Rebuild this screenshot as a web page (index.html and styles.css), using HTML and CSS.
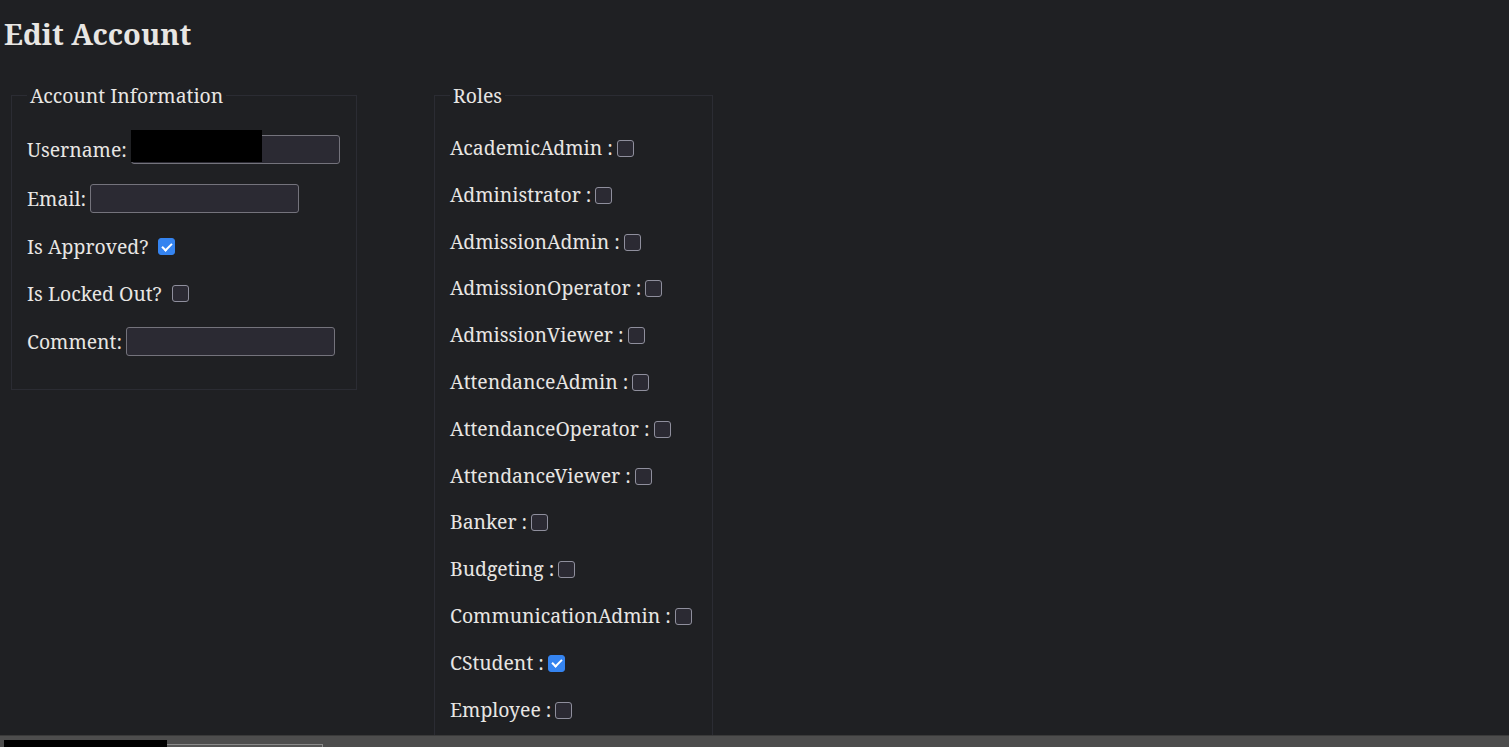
FILE: index.html
```html
<!DOCTYPE html>
<html lang="en">
<head>
<meta charset="utf-8">
<title>Edit Account</title>
<link rel="stylesheet" href="styles.css">
</head>
<body>
<h2 class="title">Edit Account</h2>
<div class="columns">
  <fieldset class="box box-account">
    <legend class="legend">Account Information</legend>
    <div class="row">
      <label class="lbl">Username:</label>
      <span class="field-wrap"><input class="field" type="text"><span class="redact"></span></span>
    </div>
    <div class="row">
      <label class="lbl">Email:</label>
      <input class="field" type="text">
    </div>
    <div class="row row-check">
      <label class="lbl">Is Approved?</label>
      <span class="check check-on gap"></span>
    </div>
    <div class="row row-check">
      <label class="lbl">Is Locked Out?</label>
      <span class="check gap"></span>
    </div>
    <div class="row">
      <label class="lbl">Comment:</label>
      <input class="field" type="text">
    </div>
  </fieldset>

  <fieldset class="box box-roles">
    <legend class="legend">Roles</legend>
    <div class="role">AcademicAdmin :<span class="check"></span></div>
    <div class="role">Administrator :<span class="check"></span></div>
    <div class="role">AdmissionAdmin :<span class="check"></span></div>
    <div class="role">AdmissionOperator :<span class="check"></span></div>
    <div class="role">AdmissionViewer :<span class="check"></span></div>
    <div class="role">AttendanceAdmin :<span class="check"></span></div>
    <div class="role">AttendanceOperator :<span class="check"></span></div>
    <div class="role">AttendanceViewer :<span class="check"></span></div>
    <div class="role">Banker :<span class="check"></span></div>
    <div class="role">Budgeting :<span class="check"></span></div>
    <div class="role">CommunicationAdmin :<span class="check"></span></div>
    <div class="role">CStudent :<span class="check check-on"></span></div>
    <div class="role">Employee :<span class="check"></span></div>
  </fieldset>
</div>
<div class="bottom-bar">
  <span class="bar-redact"></span>
  <span class="bar-field"></span>
</div>
</body>
</html>
```

FILE: styles.css
```css
html, body {
  margin: 0;
  padding: 0;
  background: #1f2023;
  color: #e8e6e3;
  font-family: "Noto Serif", "DejaVu Serif", "Liberation Serif", serif;
}

body {
  padding: 0 0 60px 0;
}

.title {
  margin: 0;
  padding: 16px 0 0 4px;
  font-size: 29px;
  line-height: 36px;
  font-weight: 700;
}

.columns {
  display: flex;
  align-items: flex-start;
  gap: 77px;
  padding: 30px 0 0 11px;
}

.box {
  margin: 0;
  border: 1px solid #2b2c33;
  box-sizing: border-box;
  min-width: 0;
}

.box-account {
  width: 346px;
  padding: 6px 15px 13px 15px;
}

.box-roles {
  width: 279px;
  padding: 6px 15px 12px 15px;
}

.legend {
  font-size: 19.4px;
  line-height: 27px;
  padding: 0 3px;
  margin-left: 0;
  white-space: nowrap;
}

.row {
  display: flex;
  align-items: center;
  min-height: 27px;
  margin: 20px 0;
  font-size: 19.4px;
  line-height: 27px;
  white-space: nowrap;
}

.row:first-of-type {
  margin-top: 20px;
}

.lbl {
  margin-right: 4px;
}

.field-wrap {
  position: relative;
  display: inline-block;
}

.field {
  display: block;
  width: 209px;
  height: 29px;
  box-sizing: border-box;
  border: 1px solid #74737c;
  border-radius: 3px;
  background: #2b2a33;
  color: #e8e6e3;
  margin: 0;
  padding: 0 4px;
  font-size: 16px;
}

.redact {
  position: absolute;
  left: 0;
  top: -5px;
  width: 131px;
  height: 32px;
  background: #000;
}

.check {
  display: inline-block;
  width: 17px;
  height: 17px;
  box-sizing: border-box;
  border: 1px solid #8f8f9d;
  border-radius: 3px;
  background: #2b2a33;
  margin-left: 4px;
  position: relative;
  vertical-align: -2px;
}

.gap {
  margin-left: 6px;
}

.check-on {
  background: #3584f0;
  border-color: #3584f0;
}

.check-on::after {
  content: "";
  position: absolute;
  left: 5px;
  top: 1.5px;
  width: 4px;
  height: 8px;
  border: solid #fff;
  border-width: 0 2px 2px 0;
  transform: rotate(45deg);
}

.role {
  font-size: 19.4px;
  line-height: 26.8px;
  margin: 20px 0;
  white-space: nowrap;
}

.role:first-of-type {
  margin-top: 20px;
}

.bottom-bar {
  position: fixed;
  left: 0;
  right: 0;
  bottom: 0;
  height: 11px;
  background: #4d4d4d;
  border-top: 1px solid #3a3a3a;
}

.bar-redact {
  position: absolute;
  left: 4px;
  top: 4px;
  width: 163px;
  height: 10px;
  background: #000;
}

.bar-field {
  position: absolute;
  left: 167px;
  top: 8px;
  width: 155px;
  height: 6px;
  border-top: 1px solid #8a8a8a;
  border-right: 1px solid #8a8a8a;
  background: #555;
}
```
